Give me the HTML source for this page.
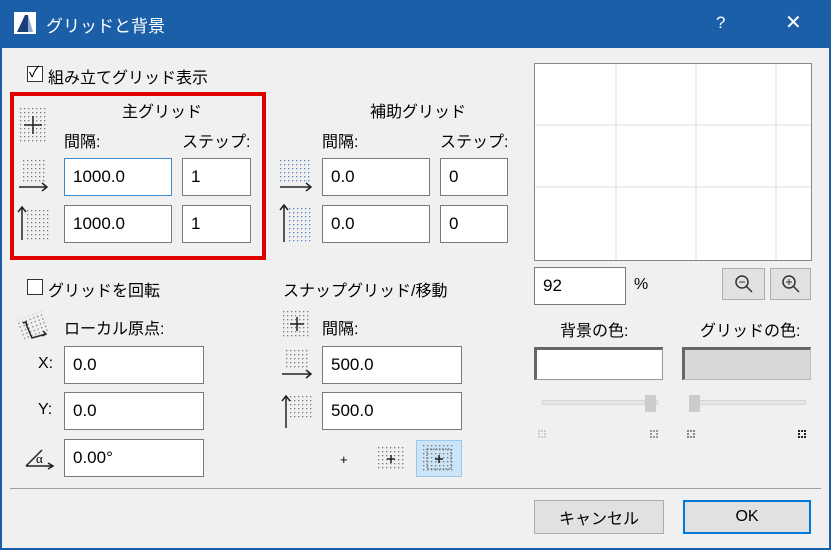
<!DOCTYPE html>
<html><head><meta charset="utf-8"><style>
*{box-sizing:border-box;margin:0;padding:0}
body{width:831px;height:550px;overflow:hidden;background:#f0f0f0;font-family:"Liberation Sans","Noto Sans CJK JP",sans-serif;font-size:15px;color:#000;position:relative}
.a{position:absolute;white-space:nowrap}
.win{position:absolute;left:0;top:0;width:831px;height:550px;border:2px solid #1a5fa8;border-top:none}
.tb{position:absolute;left:0;top:0;width:831px;height:48px;background:#1a5fa8;color:#fff}
.in{position:absolute;background:#fff;border:1px solid #7a7a7a;font-size:17px;padding-left:8px;display:flex;align-items:center}
.cb{position:absolute;width:16px;height:16px;border:1px solid #333;background:#fff}
.btn{position:absolute;background:#e1e1e1;border:1px solid #adadad;display:flex;align-items:center;justify-content:center;font-size:16px}
svg.a{overflow:visible}
</style></head><body>
<div class="win"></div>
<div class="tb">
 <svg class="a" style="left:14px;top:12px" width="22" height="22"><rect width="22" height="22" fill="#fff"/><path d="M3 20 L11 3 L14 3 L14 20Z" fill="#1a3f7a"/><path d="M14 3 L19 20 L14 20Z" fill="#8fa9cf"/></svg>
 <div class="a" style="left:46px;top:12px;font-size:17px">グリッドと背景</div>
 <div class="a" style="left:716px;top:13px;font-size:17px">?</div>
 <div class="a" style="left:785px;top:10px;font-size:20px">✕</div>
</div>
<svg width="0" height="0" style="position:absolute"><defs>
<pattern id="d" width="4" height="4" patternUnits="userSpaceOnUse"><rect width="1.3" height="1.3" fill="#777"/></pattern>
<pattern id="db" width="4" height="4" patternUnits="userSpaceOnUse"><rect width="1.3" height="1.3" fill="#5b80c0"/></pattern>
</defs></svg>
<div class="cb" style="left:27px;top:66px"></div><div class="a" style="left:29px;top:61px;font-size:15px">✓</div>
<div class="a" style="left:48px;top:64px;font-size:16px">組み立てグリッド表示</div>
<div class="a" style="left:10px;top:92px;width:256px;height:168px;border:4px solid #e00000"></div>
<svg class="a" style="left:20px;top:108px" width="26" height="34"><rect width="26" height="34" fill="url(#d)"/><path d="M13 8V26M4 17H22" stroke="#222" stroke-width="1.5"/></svg>
<div class="a" style="left:122px;top:98px;font-size:16px">主グリッド</div>
<div class="a" style="left:64px;top:128px;font-size:16px">間隔:</div>
<div class="a" style="left:182px;top:128px;font-size:16px">ステップ:</div>
<svg class="a" style="left:19px;top:160px" width="30" height="30"><rect x="2" width="24" height="24" fill="url(#d)"/><path d="M0 27H27M23 23L28 27L23 31" stroke="#222" stroke-width="1.5" fill="none"/></svg>
<svg class="a" style="left:19px;top:206px" width="30" height="34"><rect x="6" y="4" width="24" height="30" fill="url(#d)"/><path d="M3 34V2M-1 6L3 1L7 6" stroke="#222" stroke-width="1.5" fill="none"/></svg>
<div class="in" style="left:64px;top:158px;width:108px;height:38px;border-color:#3c8ad0">1000.0</div>
<div class="in" style="left:182px;top:158px;width:69px;height:38px">1</div>
<div class="in" style="left:64px;top:205px;width:108px;height:38px">1000.0</div>
<div class="in" style="left:182px;top:205px;width:69px;height:38px">1</div>
<div class="a" style="left:370px;top:98px;font-size:16px">補助グリッド</div>
<div class="a" style="left:322px;top:128px;font-size:16px">間隔:</div>
<div class="a" style="left:440px;top:128px;font-size:16px">ステップ:</div>
<svg class="a" style="left:280px;top:160px" width="32" height="30"><rect width="32" height="24" fill="url(#db)"/><path d="M0 27H30M26 23L31 27L26 31" stroke="#222" stroke-width="1.5" fill="none"/></svg>
<svg class="a" style="left:281px;top:204px" width="32" height="38"><rect x="6" y="2" width="26" height="36" fill="url(#db)"/><path d="M3 38V2M-1 6L3 1L7 6" stroke="#222" stroke-width="1.5" fill="none"/></svg>
<div class="in" style="left:322px;top:158px;width:108px;height:38px">0.0</div>
<div class="in" style="left:440px;top:158px;width:68px;height:38px">0</div>
<div class="in" style="left:322px;top:205px;width:108px;height:38px">0.0</div>
<div class="in" style="left:440px;top:205px;width:68px;height:38px">0</div>
<svg class="a" style="left:534px;top:63px" width="278" height="198"><rect x="0.5" y="0.5" width="277" height="197" fill="#fff" stroke="#888"/><g stroke="#ddd"><line x1="82" y1="1" x2="82" y2="197"/><line x1="162" y1="1" x2="162" y2="197"/><line x1="242" y1="1" x2="242" y2="197"/><line x1="1" y1="62" x2="277" y2="62"/><line x1="1" y1="124" x2="277" y2="124"/></g></svg>
<div class="in" style="left:534px;top:267px;width:92px;height:38px">92</div>
<div class="a" style="left:634px;top:276px;font-size:16px">%</div>
<div class="btn" style="left:722px;top:268px;width:43px;height:32px"><svg width="20" height="20"><circle cx="8" cy="8" r="6" fill="none" stroke="#333" stroke-width="1.5"/><line x1="12" y1="12" x2="18" y2="18" stroke="#333" stroke-width="1.5"/><line x1="5" y1="8" x2="11" y2="8" stroke="#333"/></svg></div>
<div class="btn" style="left:770px;top:268px;width:41px;height:32px"><svg width="20" height="20"><circle cx="8" cy="8" r="6" fill="none" stroke="#333" stroke-width="1.5"/><line x1="12" y1="12" x2="18" y2="18" stroke="#333" stroke-width="1.5"/><line x1="5" y1="8" x2="11" y2="8" stroke="#333"/><line x1="8" y1="5" x2="8" y2="11" stroke="#333"/></svg></div>
<div class="a" style="left:560px;top:317px;font-size:16px">背景の色:</div>
<div class="a" style="left:700px;top:317px;font-size:16px">グリッドの色:</div>
<div class="a" style="left:534px;top:347px;width:129px;height:33px;background:#fff;border:1px solid #999;border-top:3px solid #666;border-left:3px solid #666"></div>
<div class="a" style="left:682px;top:347px;width:129px;height:33px;background:#d8d8d8;border:1px solid #bbb;border-top:3px solid #666;border-left:3px solid #666"></div>
<div class="a" style="left:542px;top:400px;width:116px;height:5px;background:#e6e6e6;border:1px solid #d6d6d6"></div>
<div class="a" style="left:645px;top:395px;width:11px;height:17px;background:#ccc"></div>
<div class="a" style="left:690px;top:400px;width:116px;height:5px;background:#e6e6e6;border:1px solid #d6d6d6"></div>
<div class="a" style="left:689px;top:395px;width:11px;height:17px;background:#ccc"></div>
<div class="a" style="left:538px;top:430px;width:8px;height:8px;border:2px dotted #ccc"></div>
<div class="a" style="left:650px;top:430px;width:8px;height:8px;border:2px dotted #999"></div>
<div class="a" style="left:687px;top:430px;width:8px;height:8px;border:2px dotted #888"></div>
<div class="a" style="left:798px;top:430px;width:8px;height:8px;border:2px dotted #222"></div>
<div class="cb" style="left:27px;top:279px"></div>
<div class="a" style="left:48px;top:277px;font-size:16px">グリッドを回転</div>
<svg class="a" style="left:16px;top:310px" width="34" height="32"><g transform="rotate(-20 17 16)"><rect x="4" y="5" width="28" height="22" fill="url(#d)"/></g><path d="M10 14L16 28L30 24M7 13L10 12L11 16M27 21L30 24L26 26" stroke="#222" stroke-width="1.5" fill="none"/></svg>
<div class="a" style="left:64px;top:315px;font-size:16px">ローカル原点:</div>
<div class="a" style="left:38px;top:355px;font-size:16px">X:</div>
<div class="a" style="left:38px;top:401px;font-size:16px">Y:</div>
<svg class="a" style="left:24px;top:448px" width="32" height="22"><path d="M2 18L18 2M2 18H28M24 15L29 18L24 21" stroke="#222" stroke-width="1.5" fill="none"/><text x="12" y="15" font-size="13" font-family="Liberation Serif">α</text></svg>
<div class="in" style="left:64px;top:346px;width:140px;height:38px">0.0</div>
<div class="in" style="left:64px;top:392px;width:140px;height:38px">0.0</div>
<div class="in" style="left:64px;top:439px;width:140px;height:38px">0.00°</div>
<div class="a" style="left:283px;top:277px;font-size:16px">スナップグリッド/移動</div>
<svg class="a" style="left:283px;top:311px" width="28" height="26"><rect width="28" height="26" fill="url(#d)"/><path d="M14 6V20M7 13H21" stroke="#222" stroke-width="1.5"/></svg>
<div class="a" style="left:322px;top:315px;font-size:16px">間隔:</div>
<svg class="a" style="left:282px;top:350px" width="30" height="28"><rect x="2" width="26" height="20" fill="url(#d)"/><path d="M0 24H28M24 20L29 24L24 28" stroke="#222" stroke-width="1.5" fill="none"/></svg>
<svg class="a" style="left:282px;top:396px" width="30" height="32"><rect x="8" width="22" height="24" fill="url(#d)"/><path d="M4 32V1M0 5L4 0L8 5" stroke="#222" stroke-width="1.5" fill="none"/></svg>
<div class="in" style="left:322px;top:346px;width:140px;height:38px">500.0</div>
<div class="in" style="left:322px;top:392px;width:140px;height:38px">500.0</div>
<div class="a" style="left:340px;top:452px;font-size:13px">+</div>
<svg class="a" style="left:378px;top:447px" width="26" height="24"><rect width="26" height="24" fill="url(#d)"/><path d="M13 8V16M9 12H17" stroke="#222" stroke-width="1.5"/></svg>
<div class="a" style="left:416px;top:440px;width:46px;height:37px;background:#cce4f7;border:1px solid #99c9ef"></div>
<svg class="a" style="left:423px;top:445px" width="32" height="28"><rect width="32" height="28" fill="url(#d)"/><rect x="4" y="4" width="24" height="20" fill="none" stroke="#555" stroke-dasharray="1.5 1.5"/><path d="M16 10V18M12 14H20" stroke="#222" stroke-width="1.5"/></svg>
<div class="a" style="left:10px;top:488px;width:811px;border-top:1px solid #a0a0a0"></div>
<div class="btn" style="left:534px;top:500px;width:130px;height:34px">キャンセル</div>
<div class="btn" style="left:683px;top:500px;width:128px;height:34px;border:2px solid #0078d7">OK</div>
</body></html>
